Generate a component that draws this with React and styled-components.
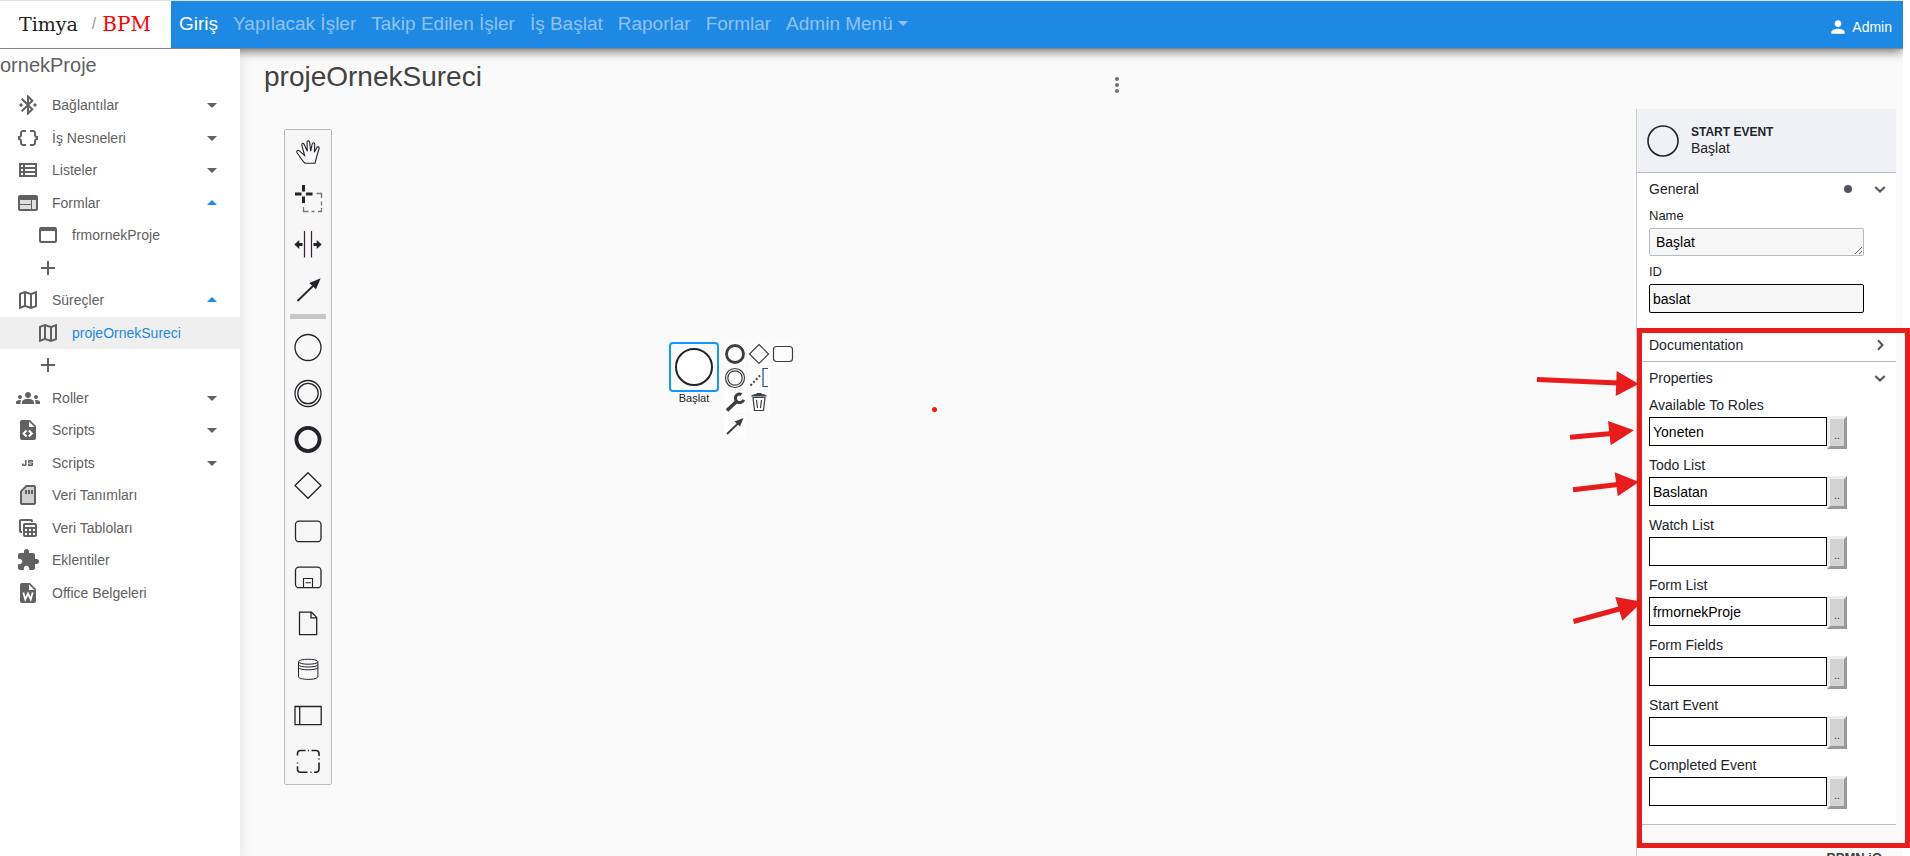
import React from 'react';
import styled, { createGlobalStyle, css } from 'styled-components';
import {
  MdAdd,
  MdArrowDropDown,
  MdArrowDropUp,
  MdBluetoothConnected,
  MdDataObject,
  MdExtension,
  MdGroups,
  MdJavascript,
  MdMoreVert,
  MdOutlineMap,
  MdOutlineViewList,
  MdPerson,
  MdTableView,
  MdWebAsset,
} from 'react-icons/md';

const INK = '#22242a';
const RED = '#e81c1c';

const GlobalStyle = createGlobalStyle`
  * { box-sizing: border-box; }
  body {
    margin: 0;
    background: #fff;
    color: #22242a;
    font: 14px/16px "Liberation Sans", Arial, sans-serif;
  }
  button, input, textarea { font: inherit; color: inherit; margin: 0; }
  a { color: inherit; text-decoration: none; }
`;

/* ---------- shell ---------- */

const Page = styled.div`
  display: flex;
  flex-direction: column;
  min-height: 100vh;
  margin-right: 7px;
  border-top: 1px solid #dfe3ea;
  background: #fafafa;
`;

const TopBar = styled.header`
  position: relative;
  display: flex;
  align-items: stretch;
  height: 48px;
  border-bottom: 1px solid #85888b;
  background: #1e88e5;
  box-shadow: 0 2px 10px rgba(0, 0, 0, 0.6);
  clip-path: inset(0 0 -20px 0);
`;

const Brand = styled.a`
  display: flex;
  align-items: center;
  width: 171px;
  padding: 0 0 2px 19px;
  background: #fff;
  color: #222;
  font: 19px/24px "DejaVu Serif", serif;
`;

const BrandSlash = styled.span`
  margin: 0 6px 0 14px;
  color: #999;
  font-family: "Liberation Sans", sans-serif;
  font-size: 16px;
`;

const BrandSuffix = styled.span`
  color: #f00;
  font-size: 20px;
`;

const Nav = styled.nav`
  display: flex;
  align-items: center;
  flex: 1;
  gap: 15px;
  padding: 0 8px 2px;
  font-size: 19px;
  line-height: 24px;
`;

const NavLink = styled.a`
  display: flex;
  align-items: center;
  color: ${(p) => (p.$active ? '#fff' : 'rgba(255, 255, 255, 0.5)')};
  white-space: nowrap;
`;

const NavCaret = styled.span`
  margin-left: 5px;
  border: 5px solid transparent;
  border-top-color: currentColor;
  border-bottom-width: 0;
`;

const UserButton = styled.button`
  display: flex;
  align-items: center;
  gap: 4px;
  padding: 4px 11px 0 0;
  border: 0;
  background: none;
  color: #fff;
`;

const Body = styled.div`
  display: flex;
  flex: 1;
`;

/* ---------- sidebar ---------- */

const Sidebar = styled.aside`
  position: relative;
  flex: none;
  width: 240px;
  background: #fff;
  color: #616161;
  box-shadow: 4px 4px 10px rgba(0, 0, 0, 0.06);
`;

const ProjectTitle = styled.h2`
  margin: 0;
  padding: 4px 0 12px;
  font-size: 20px;
  font-weight: 400;
  line-height: 24px;
`;

const Tree = styled.ul`
  display: grid;
  grid-auto-rows: 1fr;
  height: 520px;
  margin: 0;
  padding: 0;
  list-style: none;
`;

const TreeRow = styled.a`
  display: flex;
  align-items: center;
  height: 100%;
  gap: 12px;
  padding: 0 16px;
  ${(p) => p.$nested && css`padding-left: 36px;`}
  ${(p) => p.$selected && css`background: #efefef;`}
`;

const TreeIcon = styled.span`
  display: flex;
  color: #616161;
`;

const TreeLabel = styled.span`
  flex: 1;
  ${(p) => p.$selected && css`color: #1e88e5;`}
`;

const TreeCaret = styled.span`
  display: flex;
  color: ${(p) => (p.$open ? '#1e88e5' : '#616161')};
`;

/* ---------- workspace ---------- */

const Workspace = styled.main`
  display: flex;
  flex: 1;
  flex-direction: column;
  min-width: 0;
`;

const TitleRow = styled.div`
  display: flex;
  height: 60px;
`;

const Title = styled.h1`
  width: 52%;
  margin: 0;
  padding: 12px 0 0 24px;
  color: #424242;
  font-size: 28px;
  font-weight: 400;
  line-height: 32px;
`;

const MenuButton = styled.button`
  align-self: center;
  display: flex;
  margin-top: 12px;
  padding: 0;
  border: 0;
  background: none;
  color: #707070;
`;

const Editor = styled.div`
  position: relative;
  display: flex;
  flex: 1;
  padding: 0 7px 0 44px;
`;

const Palette = styled.div`
  flex: none;
  align-self: flex-start;
  width: 48px;
  margin-top: 20px;
  border: 1px solid #b9bac6;
  border-radius: 2px;
  background: #f7f7f7;
`;

const Tool = styled.button`
  display: block;
  width: 46px;
  height: 46px;
  padding: 0;
  border: 0;
  background: none;
  color: ${INK};
`;

const PaletteRule = styled.hr`
  height: 5px;
  margin: 0 5px 5px;
  border: 0;
  background: #c8c8c8;
`;

const Canvas = styled.section`
  position: relative;
  flex: 1;
`;

const StartNode = styled.div`
  position: absolute;
  left: 337px;
  top: 233px;
  width: 50px;
  text-align: center;
`;

const NodeFrame = styled.div`
  display: grid;
  place-items: center;
  height: 50px;
  border: 2px solid #0d99ff;
  border-radius: 4px;
`;

const NodeShape = styled.div`
  width: 38px;
  height: 38px;
  border: 2px solid ${INK};
  border-radius: 50%;
  background: #fff;
`;

const NodeLabel = styled.div`
  font-size: 11px;
  line-height: 13px;
`;

const ContextPad = styled.div`
  position: absolute;
  left: 392px;
  top: 234px;
  display: grid;
  grid-template-columns: repeat(3, 22px);
  grid-auto-rows: 22px;
  gap: 2px;
`;

const PadButton = styled.button`
  display: block;
  padding: 0;
  border: 0;
  background: #fdfdfd;
  color: #3c3e43;
  ${(p) => p.$first && css`grid-column-start: 1;`}
`;

const Marker = styled.span`
  position: absolute;
  left: 600px;
  top: 298px;
  width: 5px;
  height: 5px;
  border-radius: 50%;
  background: ${RED};
`;

/* ---------- properties panel ---------- */

const Panel = styled.aside`
  position: relative;
  flex: none;
  width: 260px;
  border-left: 1px solid #ccc;
`;

const PanelHeader = styled.header`
  display: flex;
  align-items: center;
  gap: 12px;
  height: 64px;
  padding: 0 10px;
  border-bottom: 1px solid #b9bac6;
  background: #f0f1f4;
`;

const ElementInfo = styled.div`
  padding-bottom: 2px;
`;

const ElementType = styled.div`
  font-size: 12px;
  font-weight: 700;
`;

const Group = styled.section`
  border-bottom: 1px solid #b9bac6;
  background: #fff;
`;

const GroupHeader = styled.button`
  display: flex;
  align-items: center;
  width: 100%;
  height: 32px;
  padding: 0 8px 0 12px;
  border: 0;
  background: none;
  text-align: left;
`;

const GroupName = styled.span`
  flex: 1;
`;

const EditedDot = styled.span`
  width: 8px;
  height: 8px;
  margin-right: 20px;
  border-radius: 50%;
  background: #52555f;
`;

const GroupBody = styled.div`
  display: grid;
  gap: 8px;
  padding: 3px 12px 15px;
`;

const FieldLabel = styled.label`
  display: block;
  font-size: ${(p) => (p.$small ? 13 : 14)}px;
`;

const boxed = css`
  display: block;
  border: 1px solid #000;
  color: #000;
  outline: 0;
`;

const NameArea = styled.textarea`
  ${boxed}
  width: 215px;
  height: 28px;
  margin-top: 4px;
  padding: 5px 6px;
  border-color: #b9bac6;
  border-radius: 2px;
  background: #f7f7f7;
  overflow: hidden;
  resize: both;
`;

const IdInput = styled.input`
  ${boxed}
  width: 215px;
  height: 29px;
  margin-top: 4px;
  padding: 0 3px;
  border-radius: 2px;
  background: #f7f7f7;
`;

const PickerRow = styled.div`
  display: flex;
  align-items: flex-start;
  margin-top: 3px;
`;

const PickerInput = styled.input`
  ${boxed}
  width: 178px;
  height: 29px;
  margin-top: 1px;
  padding: 0 3px;
  background: #fff;
`;

const PickerButton = styled.button`
  width: 20px;
  height: 33px;
  padding: 5px 0 0;
  border: 3px solid;
  border-color: #eee #999 #999 #eee;
  background: #d3d3d3;
  color: #444;
  font-size: 11px;
  line-height: 12px;
`;

/* ---------- annotations over the panel ---------- */

const Highlight = styled.div`
  position: absolute;
  left: 0;
  top: 219px;
  width: 273px;
  height: 520px;
  border: 5px solid ${RED};
  pointer-events: none;
`;

const Arrows = styled.svg`
  position: absolute;
  right: 256px;
  top: 251px;
  pointer-events: none;
`;

const CreditStrip = styled.footer`
  position: absolute;
  right: 21px;
  bottom: 0;
  height: 6px;
  overflow: hidden;
`;

const Credit = styled.a`
  display: block;
  color: #404040;
  font-size: 13px;
  font-weight: 700;
`;

/* ---------- icons ---------- */

const Svg24 = ({ children }) => (
  <svg width="24" height="24" viewBox="0 0 24 24" fill="currentColor" aria-hidden="true">{children}</svg>
);

const FormsIcon = () => (
  <Svg24>
    <path opacity=".2" d="M4 9h11v9H4zM16 9h4v9h-4z" />
    <path d="M20 4H4c-1.1 0-1.99.9-1.99 2L2 18c0 1.1.9 2 2 2h16c1.1 0 2-.9 2-2V6c0-1.1-.9-2-2-2zm-5 14H4v-4h11v4zm0-5H4V9h11v4zm5 5h-4V9h4v9z" />
  </Svg24>
);

const CodeFileIcon = () => (
  <Svg24>
    <path d="M13,9H18.5L13,3.5V9M6,2H14L20,8V20A2,2 0 0,1 18,22H6C4.89,22 4,21.1 4,20V4C4,2.89 4.89,2 6,2M6.12,15.5L9.86,19.24L11.28,17.83L8.95,15.5L11.28,13.17L9.86,11.76L6.12,15.5M17.28,15.5L13.54,11.76L12.12,13.17L14.45,15.5L12.12,17.83L13.54,19.24L17.28,15.5Z" />
  </Svg24>
);

const WordFileIcon = () => (
  <Svg24>
    <path d="M6,2H14L20,8V20A2,2 0 0,1 18,22H6A2,2 0 0,1 4,20V4A2,2 0 0,1 6,2M13,3.5V9H18.5L13,3.5" />
    <polyline points="7.300,11.500 9.300,18.500 12,12.500 14.700,18.500 16.700,11.500" fill="none" stroke="#fff" strokeWidth="1.800" />
  </Svg24>
);

const CardIcon = () => (
  <Svg24>
    <path opacity=".3" d="M6 8.83V20h12V4h-7.17L6 8.83z" />
    <path d="M18 2h-8L4.02 8 4 20c0 1.1.9 2 2 2h12c1.1 0 2-.9 2-2V4c0-1.1-.9-2-2-2zm0 18H6V8.83L10.83 4H18v16zM9 7h2v4H9zm3 0h2v4h-2zm3 0h2v4h-2z" />
  </Svg24>
);

const Chevron = ({ right }) => (
  <svg width="16" height="16" viewBox="0 0 16 16" fill="none" stroke="#52555f" strokeWidth="2" aria-hidden="true">
    <path d={right ? 'M6 3.3l4.5 4.7L6 12.7' : 'M3.3 6L8 10.5 12.700 6'} />
  </svg>
);

const Glyph = ({ children }) => (
  <svg width="46" height="46" viewBox="0 0 46 46" fill="none" stroke="currentColor" strokeWidth="1.3" aria-hidden="true">
    {children}
  </svg>
);

const SmallGlyph = ({ children }) => (
  <svg width="22" height="22" viewBox="0 0 22 22" fill="none" stroke="currentColor" strokeWidth="1.2" aria-hidden="true">
    {children}
  </svg>
);

/* ---------- data ---------- */

const tools = [
  ['Hand tool', <path d="M20 33.3H30L32 25.500 34.200 18.300C34.400 16.800 32.400 16.200 31.700 17.800L29.300 22.300 29.800 14C29.700 12.300 27.400 12.300 27.200 13.900L25.700 21.200 24.600 12.100C24.200 10.400 22 10.500 22 12.300L22.300 21.300 19.100 14.200C18.300 12.700 16.200 13.500 16.800 15.200L19.600 25.300 14.300 20.800C12.800 19.600 11 21 12 22.600C14.500 26 17 30.500 20 33.300Z" strokeWidth="1.1" />],
  ['Lasso tool', <>
    <path d="M10 18h6.500M21 18h6.500M18.500 9v6.500M18.500 20.500V27" strokeWidth="3" />
    <path d="M31.500 17.500h5v4.500M36.500 25.500v4M36.500 32v3.500H33M29.500 35.500h-3M23.500 35.500h-5V31" stroke="#777" />
  </>],
  ['Space tool', <>
    <path d="M19.500 9v26.500M26.500 9v26.500" stroke="#3a2338" strokeWidth="1.200" />
    <path d="M9.300 22.500l5-4.500v3H17.500v3h-3.200v3zM36.700 22.500l-5-4.500v3H28.500v3h3.200v3z" fill="currentColor" stroke="none" />
  </>],
  ['Connect', <>
    <path d="M12.500 33L29 17" strokeWidth="1.800" />
    <path d="M35.700 10.300L31 21.300 24.300 15z" fill="currentColor" stroke="none" />
  </>],
  null,
  ['Start event', <circle cx="23" cy="23.500" r="13" />],
  ['Intermediate event', <><circle cx="23" cy="23.500" r="13" /><circle cx="23" cy="23.500" r="10.200" /></>],
  ['End event', <circle cx="23" cy="23.500" r="11.600" strokeWidth="3.800" />],
  ['Gateway', <path d="M23 10.700L36 23.500 23 36.300 10 23.500z" />],
  ['Task', <rect x="10.500" y="13.200" width="25.500" height="20.500" rx="3.500" />],
  ['Sub process', <>
    <rect x="10.500" y="13.200" width="25.500" height="20.500" rx="3.500" />
    <path d="M18.500 33.500v-9h9v9M20.500 28.800h5.500" strokeWidth="1.100" />
  </>],
  ['Data object', <path d="M14.500 12.200h12l5.200 5.200v17.300H14.500zM26 12.200v5.700h5.700" />],
  ['Data store', <path d="M13.500 15.800v15c0 1.400 4.300 2.600 9.700 2.600s9.700-1.200 9.700-2.600v-15c0-3.400-19.400-3.400-19.400 0 0 3.200 19.400 3.200 19.400 0M13.500 18.600c0 3.200 19.400 3.200 19.400 0M13.500 21.400c0 3.200 19.400 3.200 19.400 0" strokeWidth="1" />],
  ['Participant', <path d="M10 14.500h26.200v18.200H10zM14.700 14.500v18.200" />],
  ['Group', <path d="M12.500 17.500v-2q0-3 3-3h5M22.800 12.500h1.200M26.500 12.500h4.500q3 0 3 3v2.500M34 20.500v1M34 24.500v6.500q0 3.200-3 3.200h-2M26.500 34.200h-1.200M22.500 34.200h-7q-3 0-3-3v-3M12.500 25.500v-1" strokeWidth="1.600" />],
];

const padActions = [
  ['Append end event', <circle cx="11" cy="11" r="8.500" strokeWidth="2.800" />],
  ['Append gateway', <path d="M11 1.500L20.500 11 11 20.500 1.500 11z" />],
  ['Append task', <rect x="1.500" y="3.500" width="19" height="15" rx="3" />],
  ['Append intermediate event', <><circle cx="11" cy="11" r="9.500" /><circle cx="11" cy="11" r="7.200" /></>, true],
  ['Add annotation', <>
    <path d="M20 1.500h-5v18h5" stroke="#2b4a78" />
    <path d="M2.500 18.500L12 8.500" strokeWidth="2" strokeDasharray="2 2" />
  </>],
  ['Change element', <>
    <path d="M3 19.500L12 11" strokeWidth="3.600" />
    <path d="M17.500 3.400a4.300 4.300 0 1 0 2.200 5.400" strokeWidth="3" />
  </>, true],
  ['Delete', <>
    <path d="M5 6.500h12l-1.500 13h-9zM8.500 9l1 8M13.500 9l-1 8M11 9" strokeWidth="1.200" />
    <path d="M3 5.500q.5-2 5-2.500l1-1h4l1 1q4.500.500 5 2.500z" fill="currentColor" stroke="none" />
  </>],
  ['Connect', <>
    <path d="M3 19L14 8.500" strokeWidth="1.800" />
    <path d="M19.500 3L16 11.500 10.500 6.500z" fill="currentColor" stroke="none" />
  </>, true],
];

const navItems = ['Giriş', 'Yapılacak İşler', 'Takip Edilen İşler', 'İş Başlat', 'Raporlar', 'Formlar', 'Admin Menü'];

const icon = (Icon) => <Icon size={24} />;

const tree = [
  { label: 'Bağlantılar', icon: icon(MdBluetoothConnected), caret: 'down' },
  { label: 'İş Nesneleri', icon: icon(MdDataObject), caret: 'down' },
  { label: 'Listeler', icon: icon(MdOutlineViewList), caret: 'down' },
  { label: 'Formlar', icon: <FormsIcon />, caret: 'up' },
  { label: 'frmornekProje', icon: icon(MdWebAsset), nested: true },
  { icon: icon(MdAdd), nested: true, aria: 'Form ekle' },
  { label: 'Süreçler', icon: icon(MdOutlineMap), caret: 'up' },
  { label: 'projeOrnekSureci', icon: icon(MdOutlineMap), nested: true, selected: true },
  { icon: icon(MdAdd), nested: true, aria: 'Süreç ekle' },
  { label: 'Roller', icon: icon(MdGroups), caret: 'down' },
  { label: 'Scripts', icon: <CodeFileIcon />, caret: 'down' },
  { label: 'Scripts', icon: icon(MdJavascript), caret: 'down' },
  { label: 'Veri Tanımları', icon: <CardIcon /> },
  { label: 'Veri Tabloları', icon: icon(MdTableView) },
  { label: 'Eklentiler', icon: icon(MdExtension) },
  { label: 'Office Belgeleri', icon: <WordFileIcon /> },
];

const pickers = [
  ['roles', 'Available To Roles', 'Yoneten'],
  ['todo', 'Todo List', 'Baslatan'],
  ['watch', 'Watch List', ''],
  ['forms', 'Form List', 'frmornekProje'],
  ['fields', 'Form Fields', ''],
  ['start', 'Start Event', ''],
  ['completed', 'Completed Event', ''],
];

/* ---------- composed parts ---------- */

function Picker({ id, label, value }) {
  return (
    <div>
      <FieldLabel htmlFor={id}>{label}</FieldLabel>
      <PickerRow>
        <PickerInput id={id} defaultValue={value} />
        <PickerButton type="button">..</PickerButton>
      </PickerRow>
    </div>
  );
}

function PropertiesPanel() {
  return (
    <Panel>
      <PanelHeader>
        <svg width="32" height="32" viewBox="0 0 32 32" aria-hidden="true">
          <circle cx="16" cy="16" r="15" fill="none" stroke={INK} strokeWidth="1.600" />
        </svg>
        <ElementInfo>
          <ElementType>START EVENT</ElementType>
          <div>Başlat</div>
        </ElementInfo>
      </PanelHeader>
      <Group>
        <GroupHeader type="button"><GroupName>General</GroupName><EditedDot /><Chevron /></GroupHeader>
        <GroupBody>
          <div>
            <FieldLabel $small htmlFor="name">Name</FieldLabel>
            <NameArea id="name" rows={1} defaultValue="Başlat" />
          </div>
          <div>
            <FieldLabel $small htmlFor="element-id">ID</FieldLabel>
            <IdInput id="element-id" defaultValue="baslat" />
          </div>
        </GroupBody>
      </Group>
      <Group>
        <GroupHeader type="button"><GroupName>Documentation</GroupName><Chevron right /></GroupHeader>
      </Group>
      <Group>
        <GroupHeader type="button"><GroupName>Properties</GroupName><Chevron /></GroupHeader>
        <GroupBody>
          {pickers.map(([id, label, value]) => <Picker key={id} id={id} label={label} value={value} />)}
        </GroupBody>
      </Group>
      <Highlight />
    </Panel>
  );
}

function Annotations() {
  return (
    <Arrows width="112" height="266" viewBox="1535 360 112 266" fill={RED} stroke={RED} aria-hidden="true">
      <path d="M1537 379.500L1618 383M1570 437.300L1612 433.500M1573 489.700L1618 484.500M1573.500 621.500L1621 608.500" strokeWidth="5" />
      <path d="M1616.700 371L1638.700 384 1615.700 396zM1608 421L1634 430.300 1610.700 445.300zM1614.700 472.300L1639 482 1617.700 496.300zM1615.300 597L1642.300 601.700 1622.300 620.700z" stroke="none" />
    </Arrows>
  );
}

export default function App() {
  return (
    <>
      <GlobalStyle />
      <Page>
        <TopBar>
          <Brand href="#">Timya<BrandSlash>/</BrandSlash><BrandSuffix>BPM</BrandSuffix></Brand>
          <Nav>
            {navItems.map((label, i) => (
              <NavLink key={label} href="#" $active={i === 0}>
                {label}{i === navItems.length - 1 && <NavCaret />}
              </NavLink>
            ))}
          </Nav>
          <UserButton type="button"><MdPerson size={20} />Admin</UserButton>
        </TopBar>
        <Body>
          <Sidebar>
            <ProjectTitle>ornekProje</ProjectTitle>
            <Tree>
              {tree.map((row, i) => (
                <li key={i}>
                  <TreeRow href="#" $nested={row.nested} $selected={row.selected} aria-label={row.aria}>
                    <TreeIcon>{row.icon}</TreeIcon>
                    <TreeLabel $selected={row.selected}>{row.label}</TreeLabel>
                    {row.caret && (
                      <TreeCaret $open={row.caret === 'up'}>
                        {row.caret === 'up' ? <MdArrowDropUp size={24} /> : <MdArrowDropDown size={24} />}
                      </TreeCaret>
                    )}
                  </TreeRow>
                </li>
              ))}
            </Tree>
          </Sidebar>
          <Workspace>
            <TitleRow>
              <Title>projeOrnekSureci</Title>
              <MenuButton type="button" aria-label="Menü"><MdMoreVert size={24} /></MenuButton>
            </TitleRow>
            <Editor>
              <Palette>
                {tools.map((tool, i) => (tool
                  ? <Tool key={i} type="button" aria-label={tool[0]}><Glyph>{tool[1]}</Glyph></Tool>
                  : <PaletteRule key={i} />))}
              </Palette>
              <Canvas>
                <StartNode>
                  <NodeFrame><NodeShape /></NodeFrame>
                  <NodeLabel>Başlat</NodeLabel>
                </StartNode>
                <ContextPad>
                  {padActions.map(([label, shape, first]) => (
                    <PadButton key={label} type="button" aria-label={label} $first={first}>
                      <SmallGlyph>{shape}</SmallGlyph>
                    </PadButton>
                  ))}
                </ContextPad>
                <Marker />
              </Canvas>
              <PropertiesPanel />
              <Annotations />
              <CreditStrip><Credit href="#">BPMN.iO</Credit></CreditStrip>
            </Editor>
          </Workspace>
        </Body>
      </Page>
    </>
  );
}
